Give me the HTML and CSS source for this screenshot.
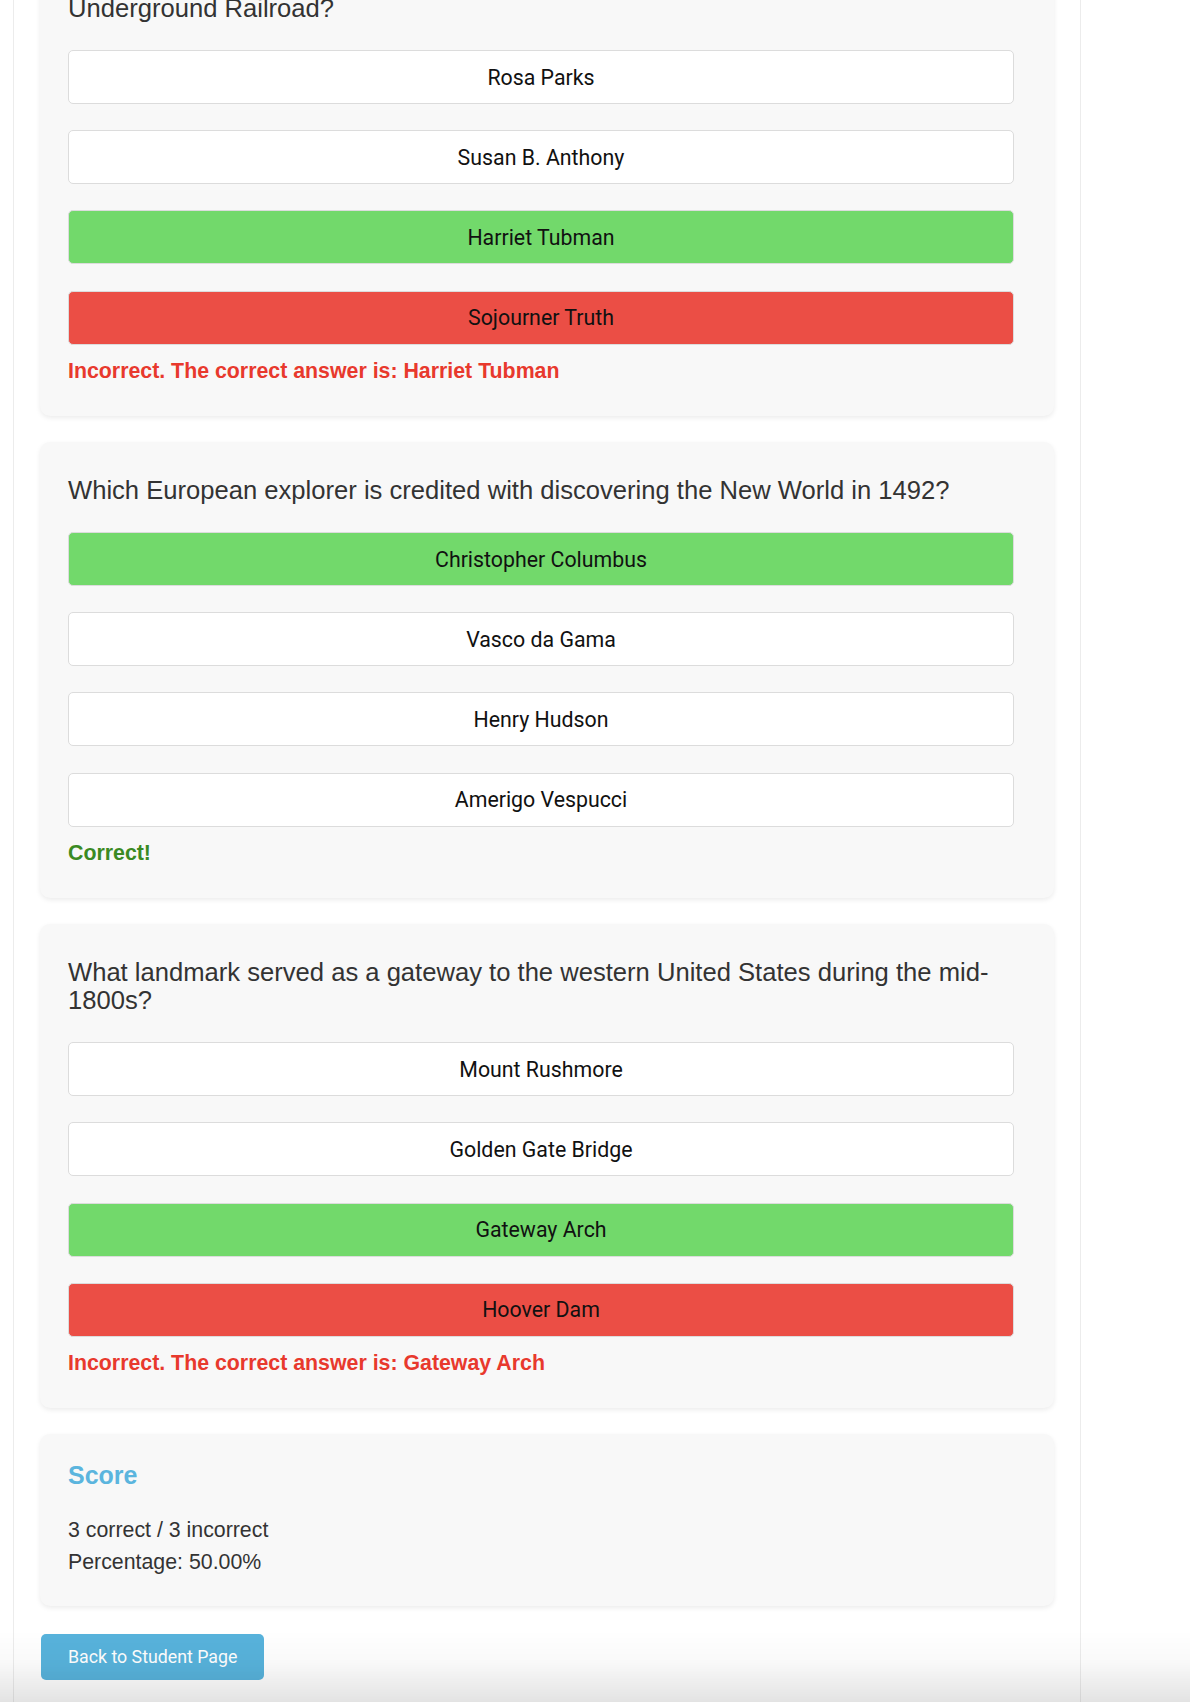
FILE: index.html
```html
<!DOCTYPE html>
<html lang="en">
<head>
<meta charset="utf-8">
<title>Quiz Results</title>
<link rel="stylesheet" href="styles.css">
</head>
<body>
<main class="container">
  <section class="card">
    <h2 class="question">Underground Railroad?</h2>
    <div class="answers">
      <button class="answer">Rosa Parks</button>
      <button class="answer">Susan B. Anthony</button>
      <button class="answer correct">Harriet Tubman</button>
      <button class="answer wrong">Sojourner Truth</button>
    </div>
    <p class="feedback feedback-wrong">Incorrect. The correct answer is: Harriet Tubman</p>
  </section>

  <section class="card">
    <h2 class="question">Which European explorer is credited with discovering the New World in 1492?</h2>
    <div class="answers">
      <button class="answer correct">Christopher Columbus</button>
      <button class="answer">Vasco da Gama</button>
      <button class="answer">Henry Hudson</button>
      <button class="answer">Amerigo Vespucci</button>
    </div>
    <p class="feedback feedback-right">Correct!</p>
  </section>

  <section class="card">
    <h2 class="question">What landmark served as a gateway to the western United States during the mid-1800s?</h2>
    <div class="answers">
      <button class="answer">Mount Rushmore</button>
      <button class="answer">Golden Gate Bridge</button>
      <button class="answer correct">Gateway Arch</button>
      <button class="answer wrong">Hoover Dam</button>
    </div>
    <p class="feedback feedback-wrong">Incorrect. The correct answer is: Gateway Arch</p>
  </section>

  <section class="card score-card">
    <h3 class="score-title">Score</h3>
    <p class="score-line first">3 correct / 3 incorrect</p>
    <p class="score-line">Percentage: 50.00%</p>
  </section>

  <button class="back-btn">Back to Student Page</button>
</main>
<div class="bottom-fade"></div>
</body>
</html>
```

FILE: styles.css
```css
* {
  box-sizing: border-box;
}

html,
body {
  margin: 0;
  padding: 0;
  background: #ffffff;
}

body {
  font-family: "Liberation Sans", Arial, Helvetica, sans-serif;
  color: #333333;
}

.container {
  margin: -40px 0 0 13px;
  width: 1068px;
  min-height: calc(100vh + 40px);
  padding: 0 26px 40px;
  border-left: 1px solid #ececec;
  border-right: 1px solid #ececec;
  display: flex;
  flex-direction: column;
  gap: 26px;
}

.card {
  background: #f8f8f8;
  border-radius: 10px;
  box-shadow: 0 2px 5px rgba(0, 0, 0, 0.08);
  padding: 34px 40px 32px 28px;
}

.question {
  margin: 0 0 28px;
  font-size: 25.6px;
  line-height: 28px;
  font-weight: normal;
  color: #333333;
}

.answers {
  display: flex;
  flex-direction: column;
  gap: 26.2px;
}

.answer {
  display: block;
  width: 100%;
  height: 54px;
  margin: 0;
  padding: 0 10px;
  font-family: Roboto, "Liberation Sans", sans-serif;
  font-size: 21.33px;
  color: #111111;
  background: #ffffff;
  border: 1px solid #dcdcdc;
  border-radius: 5px;
  text-align: center;
}

.answer.correct {
  background: #72d96b;
}

.answer.wrong {
  background: #eb4e45;
}

.feedback {
  margin: 14.5px 0 0;
  font-size: 21.33px;
  line-height: 25px;
  font-weight: bold;
}

.feedback-wrong {
  color: #e8392d;
}

.feedback-right {
  color: #3a8a23;
}

.score-card {
  padding: 27px 40px 28px 28px;
}

.score-title {
  margin: 0 0 24px;
  font-size: 24.96px;
  line-height: 29px;
  font-weight: bold;
  color: #5bb5de;
}

.score-line {
  margin: 0;
  font-size: 21.33px;
  line-height: 32px;
  color: #333333;
}

.back-btn {
  align-self: flex-start;
  margin: 2px 0 0 1px;
  height: 46px;
  padding: 0 27px;
  font-family: Roboto, "Liberation Sans", sans-serif;
  font-size: 17.78px;
  color: #ffffff;
  background: #58b3dc;
  border: none;
  border-radius: 5px;
}

.bottom-fade {
  position: fixed;
  left: 0;
  right: 0;
  bottom: 0;
  height: 72px;
  pointer-events: none;
  background: linear-gradient(to bottom, rgba(0, 0, 0, 0) 0%, rgba(0, 0, 0, 0.025) 45%, rgba(0, 0, 0, 0.11) 100%);
}
```
